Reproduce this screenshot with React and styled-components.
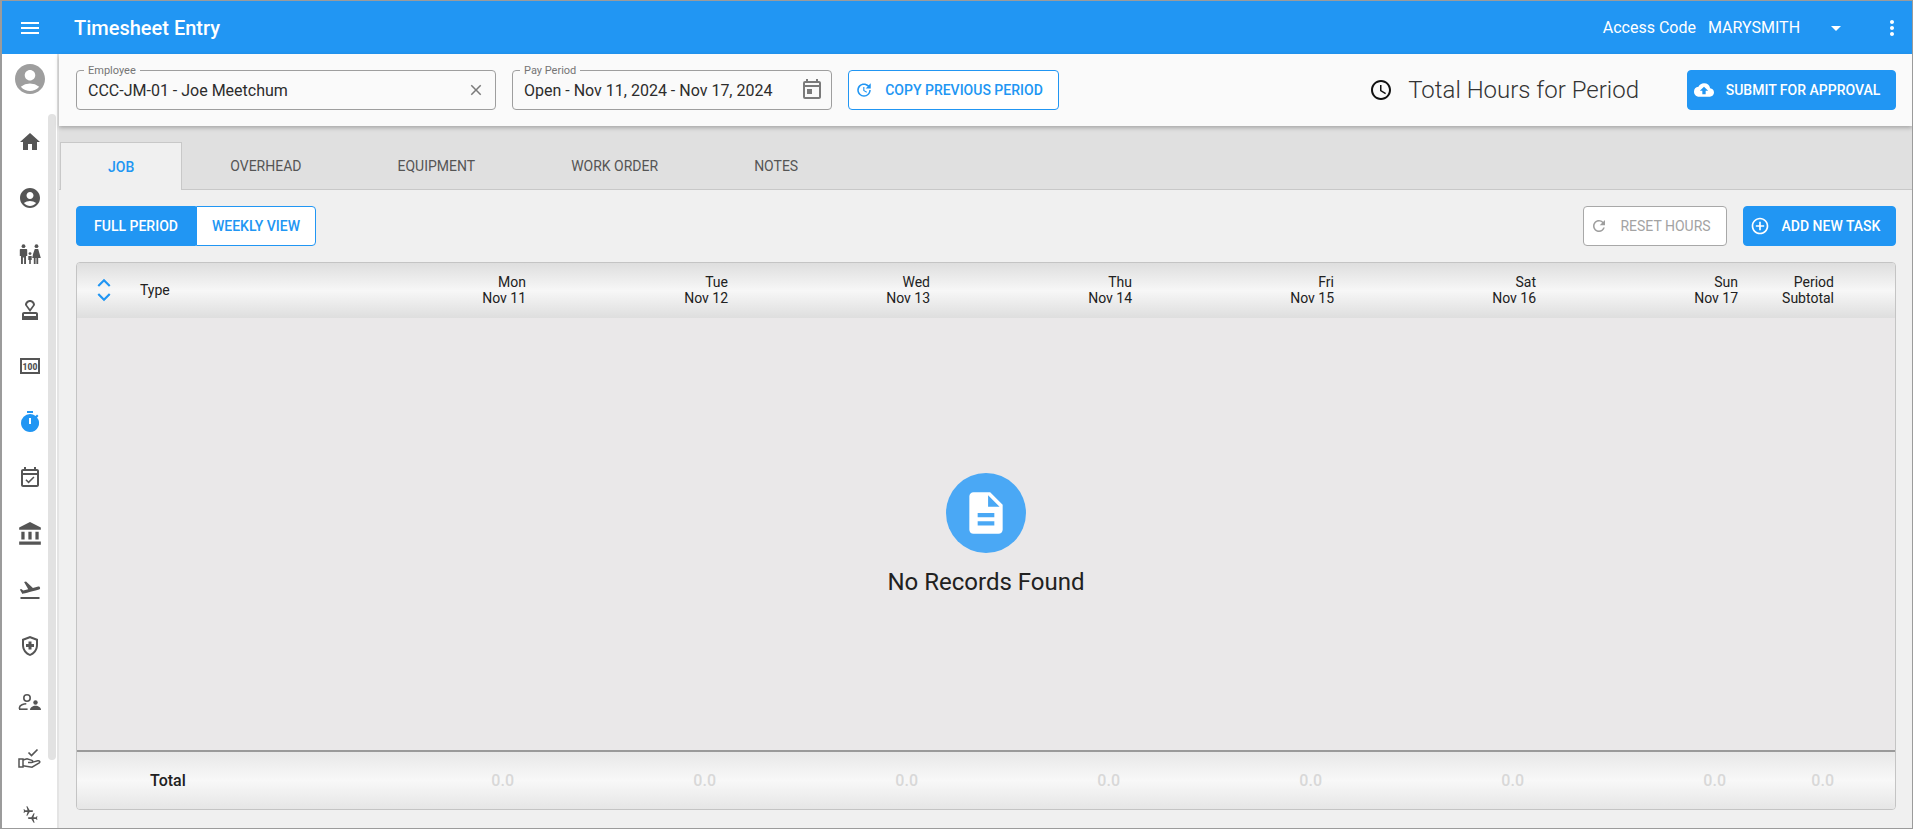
import React from 'react';
import styled, { createGlobalStyle } from 'styled-components';
import {
  MdMenu,
  MdArrowDropDown,
  MdMoreVert,
  MdClose,
  MdOutlineToday,
  MdUpdate,
  MdAccessTime,
  MdCloudUpload,
  MdRefresh,
  MdAddCircleOutline,
  MdExpandLess,
  MdExpandMore,
  MdDescription,
  MdAccountCircle,
  MdHome,
  MdOutlineApproval,
  MdTimer,
  MdOutlineEventAvailable,
  MdAccountBalance,
  MdFlightTakeoff,
  MdOutlineHealthAndSafety,
  MdConnectingAirports,
} from 'react-icons/md';

const GlobalStyle = createGlobalStyle`
  html, body {
    margin: 0;
    padding: 0;
    height: 100%;
    overflow: hidden;
  }
  body {
    font-family: Roboto, "Liberation Sans", sans-serif;
    background: #f0f0f0;
    color: #212121;
  }
  * {
    box-sizing: border-box;
  }
`;

const Frame = styled.div`
  display: flex;
  flex-direction: column;
  height: 829px;
  width: 1913px;
  border: 1px solid #9b9b9b;
  border-left-width: 2px;
  overflow: hidden;
`;

const Header = styled.header`
  display: flex;
  align-items: center;
  flex: none;
  height: 53px;
  background: #2196f3;
  color: #fff;
  padding: 0 8px 0 16px;
`;

const MenuButton = styled.span`
  display: flex;
  font-size: 24px;
  margin-right: 32px;
`;

const AppTitle = styled.h1`
  flex: 1;
  margin: 0;
  font-size: 20px;
  font-weight: 500;
`;

const AccessLabel = styled.span`
  font-size: 16px;
  margin-right: 12px;
`;

const AccessValue = styled.span`
  font-size: 16px;
  width: 116px;
`;

const Caret = styled.span`
  display: flex;
  font-size: 24px;
  margin-right: 32px;
`;

const DotsButton = styled.span`
  display: flex;
  font-size: 24px;
`;

const Body = styled.div`
  display: flex;
  flex: 1;
  min-height: 0;
`;

const Sidebar = styled.nav`
  position: relative;
  flex: none;
  width: 57px;
  background: #fff;
  border-right: 2px solid #e4e4e4;
  overflow: hidden;
`;

const SideScroll = styled.div`
  position: absolute;
  left: 46px;
  top: 60px;
  width: 8px;
  height: 646px;
  border-radius: 4px;
  background: #e2e2e2;
`;

const AvatarSlot = styled.div`
  display: flex;
  justify-content: center;
  height: 60px;
  padding-top: 7px;
  padding-left: 1px;
  font-size: 36px;
  color: #9e9e9e;
`;

const SideItem = styled.div`
  display: flex;
  align-items: center;
  justify-content: center;
  height: 56px;
  padding-left: 1px;
  font-size: ${(p) => p.$size || 24}px;
  color: ${(p) => (p.$active ? '#2196f3' : '#555')};
`;

const Content = styled.main`
  display: flex;
  flex-direction: column;
  flex: 1;
  min-width: 0;
`;

const Toolbar = styled.div`
  position: relative;
  z-index: 2;
  display: flex;
  align-items: center;
  flex: none;
  height: 72px;
  padding: 0 16px 0 17px;
  background: #fafafa;
  box-shadow: 0 2px 4px rgba(0, 0, 0, 0.25);
`;

const Field = styled.div`
  position: relative;
  display: flex;
  align-items: center;
  justify-content: space-between;
  width: ${(p) => p.$width}px;
  height: 40px;
  margin-right: 16px;
  padding: 0 ${(p) => p.$right}px 0 11px;
  border: 1px solid #9e9e9e;
  border-radius: 4px;
`;

const FieldLabel = styled.span`
  position: absolute;
  left: 7px;
  top: -6px;
  padding: 0 4px;
  font-size: 11px;
  line-height: 11px;
  color: #757575;
  background: #fafafa;
`;

const FieldValue = styled.span`
  font-size: 16px;
  color: #2c2c2c;
`;

const FieldIcon = styled.span`
  display: flex;
  font-size: ${(p) => p.$size}px;
  color: #7a7a7a;
`;

const BaseButton = styled.button`
  display: flex;
  align-items: center;
  justify-content: center;
  height: 40px;
  padding: 0 9px 0 0;
  font-family: inherit;
  font-size: 14px;
  font-weight: 500;
  border-radius: 4px;
`;

const OutlineButton = styled(BaseButton)`
  width: ${(p) => p.$width}px;
  gap: 12px;
  background: #fff;
  color: ${(p) => (p.$muted ? '#a3a3a3' : '#2196f3')};
  border: 1px solid ${(p) => (p.$muted ? '#a8a8a8' : '#2196f3')};
  font-weight: ${(p) => (p.$muted ? 400 : 500)};

  svg {
    font-size: 18px;
    color: ${(p) => (p.$muted ? '#9e9e9e' : '#2196f3')};
  }
`;

const SolidButton = styled(BaseButton)`
  width: ${(p) => p.$width}px;
  gap: 12px;
  background: #2196f3;
  color: #fff;
  border: 1px solid #2196f3;

  svg {
    font-size: 20px;
  }
`;

const TotalBlock = styled.div`
  display: flex;
  align-items: center;
  gap: 15px;
  margin-left: auto;
  margin-right: 48px;
  font-size: 24px;
  font-weight: 300;
  color: #333;

  svg {
    font-size: 24px;
    color: #111;
  }
`;

const TabBar = styled.div`
  display: flex;
  align-items: flex-end;
  flex: none;
  height: 64px;
  padding-left: 1px;
  background: #e0e0e0;
  border-bottom: 1px solid #c8c8c8;
`;

const Tab = styled.div`
  display: flex;
  align-items: center;
  height: ${(p) => (p.$active ? 48 : 47)}px;
  margin-bottom: ${(p) => (p.$active ? -1 : 0)}px;
  padding: 0 47px;
  font-size: 14px;
  font-weight: ${(p) => (p.$active ? 500 : 400)};
  color: ${(p) => (p.$active ? '#2196f3' : '#555')};
  background: ${(p) => (p.$active ? '#f0f0f0' : 'transparent')};
  border: 1px solid ${(p) => (p.$active ? '#c8c8c8' : 'transparent')};
  border-bottom: none;
`;

const Panel = styled.section`
  display: flex;
  flex-direction: column;
  flex: 1;
  min-height: 0;
  padding: 16px 16px 18px 17px;
  background: #f0f0f0;
`;

const Actions = styled.div`
  display: flex;
  align-items: center;
  gap: 16px;
  flex: none;
  margin-bottom: 16px;
`;

const Toggle = styled.div`
  display: flex;
  margin-right: auto;
`;

const ToggleOption = styled.button`
  width: ${(p) => p.$width}px;
  height: 40px;
  padding: 0;
  font-family: inherit;
  font-size: 14px;
  font-weight: 500;
  color: ${(p) => (p.$on ? '#fff' : '#2196f3')};
  background: ${(p) => (p.$on ? '#2196f3' : '#fff')};
  border: 1px solid #2196f3;
  border-radius: ${(p) => (p.$on ? '4px 0 0 4px' : '0 4px 4px 0')};
`;

const Table = styled.div`
  display: flex;
  flex-direction: column;
  flex: 1;
  min-height: 0;
  border: 1px solid #c4c4c4;
  border-radius: 4px;
  overflow: hidden;
`;

const gridColumns = '63px 184px repeat(7, 202px) 96px 1fr';

const HeadRow = styled.div`
  display: grid;
  grid-template-columns: ${gridColumns};
  align-items: center;
  flex: none;
  height: 55px;
  padding-bottom: 2px;
  font-size: 14px;
  line-height: 16px;
  color: #212121;
  background: linear-gradient(#dedede, #f7f7f7 50%, #dedede);
`;

const SortCell = styled.div`
  display: flex;
  flex-direction: column;
  align-items: center;
  padding-right: 9px;
  color: #2196f3;
  font-size: 26px;

  svg {
    margin: -6px 0;
  }
`;

const HeadCell = styled.div`
  text-align: ${(p) => (p.$left ? 'left' : 'right')};
  white-space: pre-line;
`;

const EmptyBody = styled.div`
  display: flex;
  flex: 1;
  flex-direction: column;
  align-items: center;
  justify-content: center;
  padding-top: 2px;
  background: #eae8e9;
`;

const EmptyBadge = styled.div`
  display: flex;
  align-items: center;
  justify-content: center;
  width: 80px;
  height: 80px;
  margin-bottom: 13px;
  border-radius: 50%;
  background: #4aa8f5;
  color: #fff;
  font-size: 50px;
`;

const EmptyText = styled.div`
  font-size: 24px;
  line-height: 32px;
  color: #212121;
`;

const FootRow = styled.div`
  display: grid;
  grid-template-columns: ${gridColumns};
  align-items: center;
  flex: none;
  height: 59px;
  border-top: 2px solid #9a9a9a;
  font-size: 16px;
  background: linear-gradient(#e8e8e8, #f8f8f8 50%, #e6e6e6);
`;

const FootLabel = styled.div`
  grid-column: 1 / span 2;
  padding-left: 73px;
  font-weight: 500;
  color: #212121;
`;

const FootCell = styled.div`
  padding-right: ${(p) => (p.$flush ? 0 : 12)}px;
  text-align: right;
  font-weight: 500;
  color: #d8d8d8;
`;

const FamilyIcon = () => (
  <svg width="24" height="24" viewBox="0 0 24 24" fill="currentColor">
    <circle cx="5.5" cy="4.2" r="1.9" />
    <path d="M2.8 7h5.4c.6 0 1 .4 1 1v6H8v8H6.1v-6.5H4.9V22H3v-8H1.8V8c0-.6.4-1 1-1z" />
    <circle cx="18.5" cy="4.2" r="1.9" />
    <path d="M16.8 7h3.4l2.6 9h-2.6v6h-1.8v-6h-.8v6h-1.8v-6h-1.6l1-4.5z" />
    <circle cx="12" cy="11.6" r="1.4" />
    <path d="M10.3 14h3.4v4h-.9v4h-1.6v-4h-.9z" />
  </svg>
);

const HundredIcon = () => (
  <svg width="24" height="24" viewBox="0 0 24 24">
    <rect x="3" y="5" width="18" height="14" fill="none" stroke="currentColor" strokeWidth="2" />
    <text
      x="12"
      y="15.6"
      textAnchor="middle"
      fontFamily="Roboto, sans-serif"
      fontWeight="900"
      fontSize="8.5"
      fill="currentColor"
    >
      100
    </text>
  </svg>
);

const PersonBadgeIcon = () => (
  <svg width="24" height="24" viewBox="0 0 24 24" fill="none" stroke="currentColor" strokeWidth="1.6">
    <circle cx="9" cy="8" r="3.2" />
    <path d="M1.5 19v-1.6c0-2.3 4.4-3.6 6.8-3.6" />
    <path d="M1 19.2h8.6" />
    <circle cx="17.5" cy="12.5" r="2.2" fill="currentColor" stroke="none" />
    <path d="M12 20c0-2.6 2.6-4.2 5.5-4.2S23 17.4 23 20z" fill="currentColor" stroke="none" />
  </svg>
);

const HandCheckIcon = () => (
  <svg width="24" height="24" viewBox="0 0 24 24" fill="none" stroke="currentColor" strokeWidth="1.5">
    <path d="M10.5 6.5l3 3 6-6" strokeWidth="1.7" />
    <path d="M1 13h4v8H1z" />
    <path d="M5 14l4-1.2 5 1.6c1.2.5.9 2.2-.4 2.2H10" />
    <path d="M13.8 16.4l6-1.6c1.8-.3 2.6 1.2 1.4 2.2L14 21.2l-9-1.4" />
  </svg>
);

const sideItems = [
  { icon: <MdHome /> },
  { icon: <MdAccountCircle />, size: 24 },
  { icon: <FamilyIcon /> },
  { icon: <MdOutlineApproval /> },
  { icon: <HundredIcon /> },
  { icon: <MdTimer />, active: true },
  { icon: <MdOutlineEventAvailable /> },
  { icon: <MdAccountBalance />, size: 26 },
  { icon: <MdFlightTakeoff /> },
  { icon: <MdOutlineHealthAndSafety /> },
  { icon: <PersonBadgeIcon /> },
  { icon: <HandCheckIcon /> },
  { icon: <MdConnectingAirports />, size: 21 },
];

const columns = [
  'Mon\nNov 11',
  'Tue\nNov 12',
  'Wed\nNov 13',
  'Thu\nNov 14',
  'Fri\nNov 15',
  'Sat\nNov 16',
  'Sun\nNov 17',
  'Period\nSubtotal',
];

const tabs = ['JOB', 'OVERHEAD', 'EQUIPMENT', 'WORK ORDER', 'NOTES'];

const App = () => (
  <>
    <GlobalStyle />
    <Frame>
      <Header>
        <MenuButton>
          <MdMenu />
        </MenuButton>
        <AppTitle>Timesheet Entry</AppTitle>
        <AccessLabel>Access Code</AccessLabel>
        <AccessValue>MARYSMITH</AccessValue>
        <Caret>
          <MdArrowDropDown />
        </Caret>
        <DotsButton>
          <MdMoreVert />
        </DotsButton>
      </Header>
      <Body>
        <Sidebar>
          <SideScroll />
          <AvatarSlot>
            <MdAccountCircle />
          </AvatarSlot>
          {sideItems.map((item, i) => (
            <SideItem key={i} $active={item.active} $size={item.size}>
              {item.icon}
            </SideItem>
          ))}
        </Sidebar>
        <Content>
          <Toolbar>
            <Field $width={420} $right={10}>
              <FieldLabel>Employee</FieldLabel>
              <FieldValue>CCC-JM-01 - Joe Meetchum</FieldValue>
              <FieldIcon $size={18}>
                <MdClose />
              </FieldIcon>
            </Field>
            <Field $width={320} $right={7}>
              <FieldLabel>Pay Period</FieldLabel>
              <FieldValue>Open - Nov 11, 2024 - Nov 17, 2024</FieldValue>
              <FieldIcon $size={24}>
                <MdOutlineToday />
              </FieldIcon>
            </Field>
            <OutlineButton $width={211}>
              <MdUpdate />
              COPY PREVIOUS PERIOD
            </OutlineButton>
            <TotalBlock>
              <MdAccessTime />
              Total Hours for Period
            </TotalBlock>
            <SolidButton $width={209}>
              <MdCloudUpload />
              SUBMIT FOR APPROVAL
            </SolidButton>
          </Toolbar>
          <TabBar>
            {tabs.map((tab, i) => (
              <Tab key={tab} $active={i === 0}>
                {tab}
              </Tab>
            ))}
          </TabBar>
          <Panel>
            <Actions>
              <Toggle>
                <ToggleOption $on $width={120}>
                  FULL PERIOD
                </ToggleOption>
                <ToggleOption $width={120}>WEEKLY VIEW</ToggleOption>
              </Toggle>
              <OutlineButton $muted $width={144}>
                <MdRefresh />
                RESET HOURS
              </OutlineButton>
              <SolidButton $width={153}>
                <MdAddCircleOutline />
                ADD NEW TASK
              </SolidButton>
            </Actions>
            <Table>
              <HeadRow>
                <SortCell>
                  <MdExpandLess />
                  <MdExpandMore />
                </SortCell>
                <HeadCell $left>Type</HeadCell>
                {columns.map((c) => (
                  <HeadCell key={c}>{c}</HeadCell>
                ))}
              </HeadRow>
              <EmptyBody>
                <EmptyBadge>
                  <MdDescription />
                </EmptyBadge>
                <EmptyText>No Records Found</EmptyText>
              </EmptyBody>
              <FootRow>
                <FootLabel>Total</FootLabel>
                {columns.map((c, i) => (
                  <FootCell key={c} $flush={i === 7}>
                    0.0
                  </FootCell>
                ))}
              </FootRow>
            </Table>
          </Panel>
        </Content>
      </Body>
    </Frame>
  </>
);

export default App;
